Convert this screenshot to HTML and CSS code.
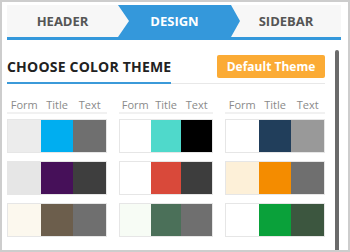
FILE: index.html
```html
<!DOCTYPE html>
<html lang="en">

<head>
    <meta charset="UTF-8">
    <meta name="viewport" content="width=device-width, initial-scale=1.0">
    <title>Theme settings</title>
    <link rel="stylesheet" href="styles.css">
</head>

<body>
    <div class="panel">
        <nav class="tabs">
            <div class="tab">HEADER</div>
            <div class="tab active">DESIGN</div>
            <div class="tab">SIDEBAR</div>
        </nav>

        <div class="panel-body">
            <div class="content">
                <div class="title-row">
                    <h2 class="title">CHOOSE COLOR THEME</h2>
                    <button class="default-btn">Default Theme</button>
                </div>

                <div class="themes">
                    <div class="theme-col">
                        <div class="labels"><span>Form</span><span>Title</span><span>Text</span></div>
                        <div class="swatches">
                            <span style="background:#ececec"></span>
                            <span style="background:#00aef0"></span>
                            <span style="background:#6f6f6f"></span>
                        </div>
                        <div class="swatches">
                            <span style="background:#e6e6e6"></span>
                            <span style="background:#461059"></span>
                            <span style="background:#3e3e3e"></span>
                        </div>
                        <div class="swatches">
                            <span style="background:#fcf8ee"></span>
                            <span style="background:#6c5e4c"></span>
                            <span style="background:#6f6f6f"></span>
                        </div>
                    </div>

                    <div class="theme-col">
                        <div class="labels"><span>Form</span><span>Title</span><span>Text</span></div>
                        <div class="swatches">
                            <span style="background:#ffffff"></span>
                            <span style="background:#4fd9cb"></span>
                            <span style="background:#000000"></span>
                        </div>
                        <div class="swatches">
                            <span style="background:#ffffff"></span>
                            <span style="background:#d9493a"></span>
                            <span style="background:#3d3d3d"></span>
                        </div>
                        <div class="swatches">
                            <span style="background:#f7fcf5"></span>
                            <span style="background:#4b7059"></span>
                            <span style="background:#6f6f6f"></span>
                        </div>
                    </div>

                    <div class="theme-col">
                        <div class="labels"><span>Form</span><span>Title</span><span>Text</span></div>
                        <div class="swatches">
                            <span style="background:#ffffff"></span>
                            <span style="background:#213e5b"></span>
                            <span style="background:#999999"></span>
                        </div>
                        <div class="swatches">
                            <span style="background:#fdf0d8"></span>
                            <span style="background:#f48c00"></span>
                            <span style="background:#6f6f6f"></span>
                        </div>
                        <div class="swatches">
                            <span style="background:#ffffff"></span>
                            <span style="background:#0aa13a"></span>
                            <span style="background:#3c563f"></span>
                        </div>
                    </div>
                </div>
            </div>

            <div class="scrollbar"></div>
        </div>
    </div>
</body>

</html>
```

FILE: styles.css
```css
body {
    margin: 0;
    font-family: "Open Sans", "Liberation Sans", sans-serif;
    background-color: #fff;
}

.panel {
    width: 350px;
    height: 252px;
    box-sizing: border-box;
    border: 2px solid #cdcdcd;
    padding: 3px 7px 0 5px;
    overflow: hidden;
}

/* tabs */
.tabs {
    display: flex;
    height: 32px;
    background-color: #f7f7f7;
    border-bottom: 3px solid #3498db;
}

.tab {
    display: flex;
    align-items: center;
    justify-content: center;
    font-size: 13px;
    font-weight: 700;
    color: #555;
}

.tab:first-child {
    width: 111px;
}

.tab.active {
    width: 113px;
    padding-right: 9px;
    margin-right: -9px;
    background-color: #3498db;
    color: #fff;
    clip-path: polygon(0 0, calc(100% - 9px) 0, 100% 50%, calc(100% - 9px) 100%, 0 100%, 11px 50%);
}

.tab:last-child {
    flex: 1;
}

/* body */
.panel-body {
    display: flex;
    height: 210px;
}

.content {
    width: 318px;
}

.scrollbar {
    width: 4px;
    margin-left: 10px;
    margin-top: 10px;
    background-color: #6b6b6b;
    border-radius: 2px 2px 0 0;
}

.title-row {
    display: flex;
    justify-content: space-between;
    align-items: flex-start;
    margin-top: 15px;
    border-bottom: 1px solid #e8e8e8;
}

.title {
    margin: 0 0 -1px 0;
    padding: 2px 0 5px 0;
    font-size: 14px;
    line-height: 20px;
    font-weight: 700;
    letter-spacing: 0.2px;
    color: #222;
    border-bottom: 2px solid #3b9ad9;
}

.default-btn {
    width: 108px;
    height: 23px;
    padding: 0;
    border: none;
    border-radius: 2px;
    background-color: #fbab35;
    color: #fff;
    font-family: inherit;
    font-size: 12px;
    font-weight: 700;
}

.themes {
    display: grid;
    grid-template-columns: 100px 94px 100px;
    column-gap: 12px;
    margin-top: 13px;
}

.labels {
    display: grid;
    grid-template-columns: 1fr 1fr 1fr;
    padding: 0 1px;
    font-size: 11px;
    line-height: 15px;
    color: #8a8a8a;
    text-align: center;
    border-bottom: 2px solid #f1f1f1;
}

.swatches {
    display: grid;
    grid-template-columns: 1fr 1fr 1fr;
    height: 34px;
    box-sizing: border-box;
    border: 1px solid #e6e6e6;
    margin-top: 8px;
}

.labels + .swatches {
    margin-top: 5px;
}
```
